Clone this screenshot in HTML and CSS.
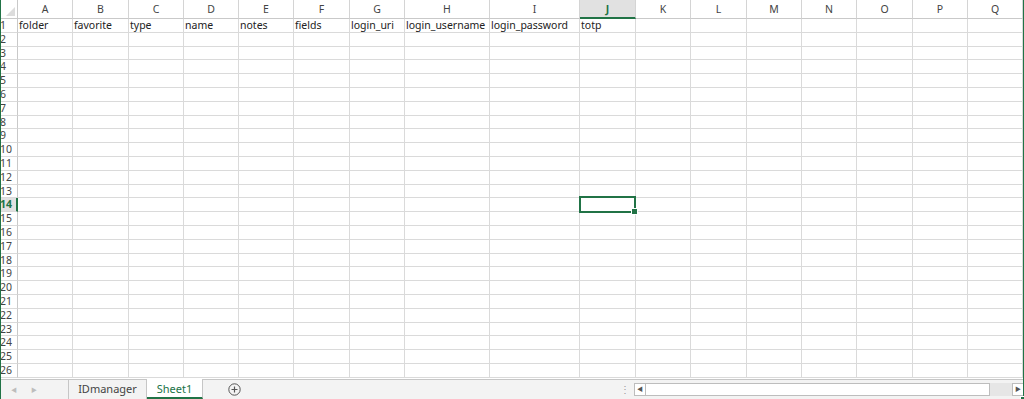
FILE: index.html
```html
<!DOCTYPE html>
<html lang="ja">
<head>
    <meta charset="UTF-8">
    <meta name="viewport" content="width=device-width, initial-scale=1.0">
    <title>Sheet1</title>
    <link rel="stylesheet" href="styles.css">
</head>
<body>
    <div class="sheet" id="sheet"></div>

    <div class="tabbar">
        <div class="nav">
            <span class="arrow">&#9664;</span>
            <span class="arrow">&#9654;</span>
        </div>
        <div class="tab">IDmanager</div>
        <div class="tab active">Sheet1</div>
        <div class="add">
            <svg width="13" height="13" viewBox="0 0 13 13">
                <circle cx="6.5" cy="6.5" r="5.7" fill="none" stroke="#555" stroke-width="1"/>
                <path d="M6.5 3.5v6M3.5 6.5h6" stroke="#555" stroke-width="1.2"/>
            </svg>
        </div>
        <div class="spacer"></div>
        <div class="grip">&#8942;</div>
        <div class="hscroll">
            <span class="sbtn">&#9664;</span>
            <span class="thumb"></span>
            <span class="track"></span>
            <span class="sbtn">&#9654;</span>
        </div>
    </div>

    <script>
        const sheet = document.getElementById('sheet');
        const cols = 'ABCDEFGHIJKLMNOPQR'.split('');
        const headers = ['folder', 'favorite', 'type', 'name', 'notes', 'fields',
            'login_uri', 'login_username', 'login_password', 'totp'];

        // corner + column letters
        const corner = document.createElement('div');
        corner.className = 'cell corner';
        corner.innerHTML = '<span class="tri"></span>';
        sheet.appendChild(corner);
        cols.forEach(c => {
            const h = document.createElement('div');
            h.className = 'cell colhead' + (c === 'J' ? ' sel' : '');
            h.textContent = c === 'R' ? '' : c;
            sheet.appendChild(h);
        });

        for (let r = 1; r <= 26; r++) {
            const rh = document.createElement('div');
            rh.className = 'cell rowhead' + (r === 14 ? ' sel' : '');
            rh.textContent = r;
            sheet.appendChild(rh);
            cols.forEach((c, i) => {
                const d = document.createElement('div');
                d.className = 'cell';
                if (r === 1 && headers[i]) d.textContent = headers[i];
                if (r === 14 && c === 'J') d.classList.add('active');
                sheet.appendChild(d);
            });
        }
    </script>
</body>
</html>
```

FILE: styles.css
```css
* {
    margin: 0;
    padding: 0;
    box-sizing: border-box;
}

body {
    width: 1024px;
    height: 399px;
    overflow: hidden;
    background: #fff;
    font-family: "Noto Sans", "Noto Sans CJK JP", sans-serif;
    color: #222;
}

.sheet {
    display: grid;
    grid-template-columns: 18px 55px 56px 55px 55px 55px 56px 55px 85px 90px 56px 55px 56px 55px 55px 56px 55px 55px 10px;
    grid-template-rows: 19px repeat(26, 13.8px);
    height: 380px;
    overflow: hidden;
    border-bottom: 1px solid #c6c6c6;
}

.cell {
    border-right: 1px solid #dadada;
    border-bottom: 1px solid #dadada;
    font-size: 10.5px;
    line-height: 13px;
    padding-left: 1px;
    white-space: nowrap;
    overflow: visible;
    position: relative;
}

.corner {
    border-right: 1px solid #c9c9c9;
    border-bottom: 1px solid #c9c9c9;
}

.tri {
    position: absolute;
    right: 2px;
    bottom: 2px;
    width: 0;
    height: 0;
    border-left: 9px solid transparent;
    border-bottom: 9px solid #dcdcdc;
}

.colhead {
    text-align: center;
    font-size: 10.5px;
    line-height: 19px;
    padding: 0;
    color: #444;
    border-right: 1px solid #d4d4d4;
    border-bottom: 1px solid #c9c9c9;
}

.colhead.sel {
    background: #e1e1e1;
    color: #217346;
    font-weight: bold;
    border-bottom: 2px solid #217346;
}

.rowhead {
    font-size: 10.5px;
    line-height: 13px;
    padding-left: 0;
    color: #444;
    border-right: 1px solid #c9c9c9;
    border-bottom: 1px solid #dadada;
}

.rowhead.sel {
    background: #e1e1e1;
    color: #217346;
    font-weight: bold;
    border-right: 2px solid #217346;
}

.active::after {
    content: "";
    position: absolute;
    left: -1px;
    top: -2px;
    right: -1px;
    bottom: -2px;
    border: 2px solid #217346;
    z-index: 2;
}

.active::before {
    content: "";
    position: absolute;
    right: -3px;
    bottom: -4px;
    width: 5px;
    height: 5px;
    background: #217346;
    border: 1px solid #fff;
    z-index: 3;
}

.tabbar {
    display: flex;
    align-items: stretch;
    height: 19px;
    background: #f3f3f3;
    color: #444;
}

.nav {
    display: flex;
    gap: 14px;
    width: 69px;
    padding-left: 11px;
    align-items: center;
    border-right: 1px solid #c6c6c6;
}

.arrow {
    font-size: 6px;
    color: #bdbdbd;
}

.tab {
    width: 78px;
    line-height: 18px;
    text-align: center;
    border-right: 1px solid #c6c6c6;
    font-size: 11px;
    color: #444;
}

.tab.active {
    background: #fff;
    color: #217346;
    width: 56px;
    margin-top: -1px;
    line-height: 19px;
    border-bottom: 2px solid #217346;
}

.add {
    display: flex;
    align-items: center;
    padding-left: 25px;
}

.spacer {
    flex: 1;
}

.grip {
    color: #999;
    font-size: 10px;
    line-height: 19px;
    width: 14px;
}

.hscroll {
    display: flex;
    align-items: center;
    width: 390px;
    padding: 2px 0 2px 0;
}

.sbtn {
    width: 12px;
    height: 13px;
    background: #fff;
    border: 1px solid #bdbdbd;
    font-size: 6px;
    line-height: 11px;
    text-align: center;
    color: #555;
}

.thumb {
    width: 344px;
    height: 13px;
    background: #fff;
    border: 1px solid #bdbdbd;
    border-left: none;
}

.track {
    flex: 1;
    height: 13px;
    background: #e6e6e6;
}
```
